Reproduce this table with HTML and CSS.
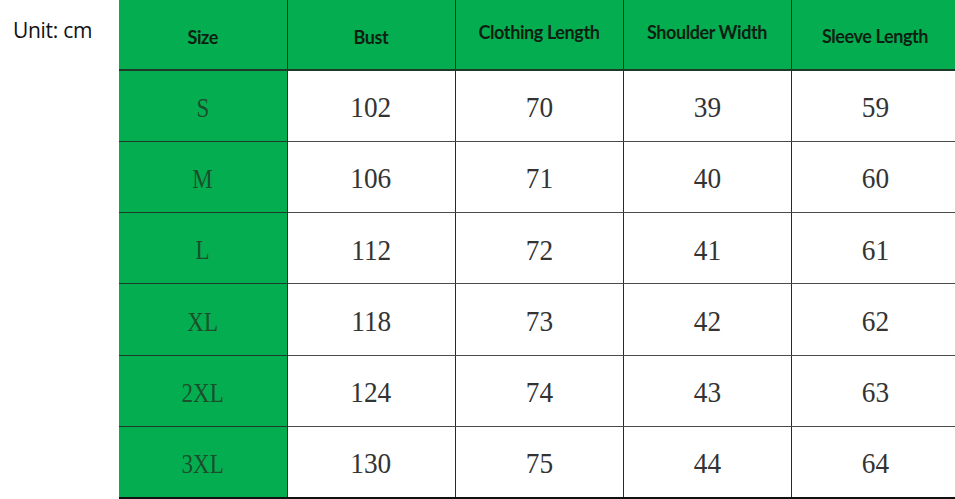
FILE: index.html
```html
<!DOCTYPE html>
<html>
<head>
<meta charset="utf-8">
<link rel="stylesheet" href="styles.css">
</head>
<body>
<div class="page">
  <div class="unit">Unit: cm</div>
  <table class="chart">
    <thead>
      <tr>
        <th class="h-size">Size</th>
        <th class="h-bust">Bust</th>
        <th class="h-up">Clothing Length</th>
        <th class="h-up">Shoulder Width</th>
        <th class="h-sleeve">Sleeve Length</th>
      </tr>
    </thead>
    <tbody>
      <tr><td class="size"><span>S</span></td><td><span>102</span></td><td><span>70</span></td><td><span>39</span></td><td><span>59</span></td></tr>
      <tr><td class="size"><span>M</span></td><td><span>106</span></td><td><span>71</span></td><td><span>40</span></td><td><span>60</span></td></tr>
      <tr><td class="size"><span>L</span></td><td><span>112</span></td><td><span>72</span></td><td><span>41</span></td><td><span>61</span></td></tr>
      <tr><td class="size"><span>XL</span></td><td><span>118</span></td><td><span>73</span></td><td><span>42</span></td><td><span>62</span></td></tr>
      <tr><td class="size"><span>2XL</span></td><td><span>124</span></td><td><span>74</span></td><td><span>43</span></td><td><span>63</span></td></tr>
      <tr><td class="size"><span>3XL</span></td><td><span>130</span></td><td><span>75</span></td><td><span>44</span></td><td><span>64</span></td></tr>
    </tbody>
  </table>
</div>
</body>
</html>
```

FILE: styles.css
```css
html, body {
  margin: 0;
  padding: 0;
  background: #ffffff;
  overflow: hidden;
}

.page {
  display: flex;
  align-items: flex-start;
  width: 1000px;
}

.unit {
  width: 119px;
  flex: none;
  box-sizing: border-box;
  padding: 16px 0 0 13px;
  font-family: "Open Sans", "Noto Sans", sans-serif;
  font-size: 21px;
  letter-spacing: -0.3px;
  color: #111;
  line-height: 28px;
}

.chart {
  border-collapse: collapse;
  table-layout: fixed;
  width: 840px;
  flex: none;
}

.chart th,
.chart td {
  width: 168px;
  padding: 0;
  text-align: center;
  border: 1px solid #2a2a2a;
  box-sizing: border-box;
}

.chart thead tr {
  height: 70px;
}

.chart th {
  background: #04ae50;
  color: #0d1f12;
  font-family: Lato, "Open Sans", sans-serif;
  font-weight: 700;
  font-size: 18px;
  letter-spacing: -0.4px;
  border-top: none;
  border-bottom: 2px solid #1f3a28;
  padding-top: 4px;
}

.chart th.h-up {
  padding-top: 0;
  padding-bottom: 6px;
}

.chart th.h-sleeve {
  padding-top: 2px;
}

.chart th:first-child,
.chart td.size {
  border-left: none;
}

.chart tbody tr {
  height: 71.3px;
}

.chart td {
  font-family: "Liberation Serif", "DejaVu Serif", serif;
  font-size: 29px;
  color: #333;
  padding-top: 4px;
  border-color: #4a4a4a #2a2a2a;
}

.chart td span {
  display: inline-block;
  transform: scaleX(0.94);
}

.chart td.size {
  background: #04ae50;
  color: #1b4f2c;
  font-size: 28px;
  border-top-color: #1f3a28;
  border-bottom-color: #1f3a28;
}

.chart td.size span {
  transform: scaleX(0.82);
}

.chart tbody tr:last-child td {
  border-bottom: 2px solid #111;
}
```
